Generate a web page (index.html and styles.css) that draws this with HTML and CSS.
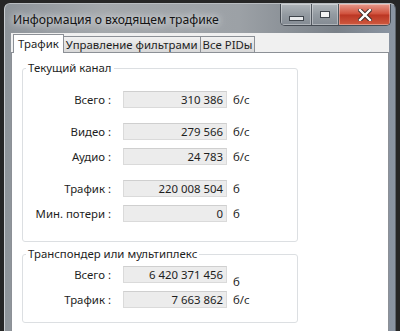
FILE: index.html
```html
<!DOCTYPE html>
<html lang="ru">
<head>
    <meta charset="UTF-8">
    <title>Информация о входящем трафике</title>
    <link rel="stylesheet" href="styles.css">
</head>
<body>
    <div class="window">
        <div class="titlebar">
            <span class="title">Информация о входящем трафике</span>
            <div class="caption">
                <span class="cbtn min"><i></i></span>
                <span class="cbtn max"><i></i></span>
                <span class="cbtn close">
                    <svg width="14" height="12" viewBox="0 0 14 12">
                        <path d="M2 1 L12 11 M12 1 L2 11" stroke="#3a2a28" stroke-width="4.2" stroke-linecap="square"/>
                        <path d="M2 1 L12 11 M12 1 L2 11" stroke="#fff" stroke-width="2.4" stroke-linecap="square"/>
                    </svg>
                </span>
            </div>
        </div>
        <div class="client">
            <div class="tabs">
                <span class="tab active">Трафик</span>
                <span class="tab">Управление фильтрами</span>
                <span class="tab">Все PIDы</span>
            </div>
            <div class="panel">
                <fieldset class="group first">
                    <legend>Текущий канал</legend>
                    <div class="row"><span class="label">Всего :</span><span class="field">310 386</span><span class="unit">б/с</span></div>
                    <div class="row far"><span class="label">Видео :</span><span class="field">279 566</span><span class="unit">б/с</span></div>
                    <div class="row near"><span class="label">Аудио :</span><span class="field">24 783</span><span class="unit">б/с</span></div>
                    <div class="row far"><span class="label">Трафик :</span><span class="field">220 008 504</span><span class="unit">б</span></div>
                    <div class="row near"><span class="label">Мин. потери :</span><span class="field">0</span><span class="unit">б</span></div>
                </fieldset>
                <fieldset class="group second">
                    <legend>Транспондер или мультиплекс</legend>
                    <div class="row"><span class="label">Всего :</span><span class="field">6 420 371 456</span><span class="unit low">б</span></div>
                    <div class="row near"><span class="label">Трафик :</span><span class="field">7 663 862</span><span class="unit">б/с</span></div>
                </fieldset>
            </div>
        </div>
    </div>
</body>
</html>
```

FILE: styles.css
```css
body {
    margin: 0;
    width: 400px;
    height: 331px;
    overflow: hidden;
    background-color: #262626;
    font-family: "Noto Sans", "Open Sans", sans-serif;
    font-size: 11.4px;
    color: #1e1e1e;
}

.window {
    margin: 3px 0 0 4px;
    width: 392px;
    height: 328px;
    box-sizing: border-box;
    overflow: hidden;
    border-left: 1px solid #c9cdd1;
    border-top: 1px solid #b9bdc1;
    border-right: 1px solid #5f666e;
    border-radius: 6px 6px 0 0;
    background: linear-gradient(90deg, #8e949a 0%, #a4a8ac 25%, #9ca1a6 60%, #7a8189 85%, #8b95a3 100%);
}

.titlebar {
    display: flex;
    justify-content: space-between;
    height: 29px;
    padding-left: 8px;
}

.title {
    font-size: 12.2px;
    line-height: 31px;
    color: #141414;
    text-shadow: 0 0 6px #e6e8ea, 0 0 10px #d6d9dc;
}

.caption {
    display: flex;
    height: 21px;
    margin-right: 4px;
    border: 1px solid #454b53;
    border-top: none;
    border-radius: 0 0 5px 5px;
    overflow: hidden;
}

.cbtn {
    display: flex;
    justify-content: center;
    align-items: center;
    height: 21px;
    box-sizing: border-box;
    box-shadow: inset 0 0 0 1px rgba(255, 255, 255, 0.35);
}

.cbtn.min {
    width: 31px;
    border-right: 1px solid #50565e;
    background: linear-gradient(#b0b5ba, #939aa1 50%, #848b93);
}

.cbtn.max {
    width: 27px;
    border-right: 1px solid #50565e;
    background: linear-gradient(#b0b5ba, #939aa1 50%, #848b93);
}

.cbtn.close {
    width: 51px;
    background: linear-gradient(#e79a8c, #d0503b 48%, #bb3623 52%, #cf5a40);
}

.min i {
    display: block;
    width: 13px;
    height: 3px;
    margin-top: 8px;
    background-color: #e8eaec;
    border: 1px solid #3e444b;
}

.max i {
    display: block;
    width: 8px;
    height: 5px;
    border: 1px solid #3e444b;
    box-shadow: inset 0 0 0 2px #f2f3f4, inset 0 1px 0 3px #f2f3f4;
}

.client {
    width: 378px;
    height: 300px;
    margin-left: 6px;
    background-color: #f0f0f0;
}

.tabs {
    display: flex;
    align-items: flex-end;
    height: 19px;
    padding-left: 2px;
}

.tab {
    height: 15px;
    line-height: 15px;
    padding: 0 2px;
    border: 1px solid #8c9096;
    border-bottom: none;
    border-left: none;
    background: linear-gradient(#f2f2f2, #e3e3e3 50%, #d9d9d9);
    white-space: nowrap;
}

.tab.active {
    position: relative;
    height: 18px;
    line-height: 17px;
    margin-bottom: -1px;
    padding: 0 4px;
    border-left: 1px solid #8c9096;
    background: #fff;
}

.panel {
    height: 290px;
    border: 1px solid #8c9096;
    background-color: #fff;
    padding: 8px 0 0 10px;
}

.group {
    width: 276px;
    box-sizing: border-box;
    margin: 0;
    padding: 2px 0 19px 0;
    border: 1px solid #dcdfe2;
    border-radius: 3px;
}

.group.second {
    margin-top: 5px;
    padding-bottom: 14px;
}

.group legend {
    margin-left: 3px;
    padding: 0 2px;
    line-height: 14px;
}

.row {
    display: grid;
    grid-template-columns: 87px 104px auto;
    align-items: center;
    height: 17px;
    margin-top: 14px;
}

.second .row {
    margin-top: 3px;
}

.row.far {
    margin-top: 15px;
}

.row.near,
.second .row.near {
    margin-top: 8px;
}

.label {
    text-align: right;
    white-space: nowrap;
    margin-right: -1px;
}

.field {
    grid-column: 2;
    margin-left: 13px;
    width: 104px;
    height: 17px;
    line-height: 16px;
    box-sizing: border-box;
    padding-right: 3px;
    text-align: right;
    background-color: #ececec;
    border: 1px solid #dadada;
    border-top-color: #cfcfcf;
}

.unit {
    margin-left: 19px;
}

.unit.low {
    align-self: end;
    margin-bottom: -6px;
}
```
